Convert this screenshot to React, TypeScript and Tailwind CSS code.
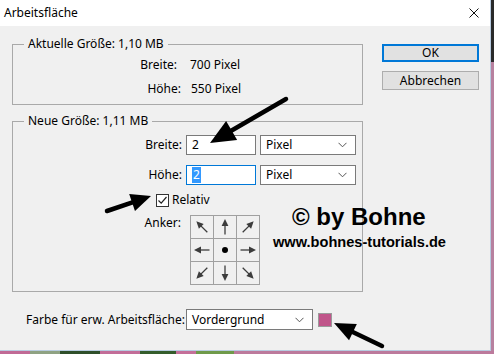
import React from "react";

type Pt = [number, number];

// thick black pointer arrow drawn on top of the dialog
function Pointer({ from, to, len = 21, half = 9 }: { from: Pt; to: Pt; len?: number; half?: number }) {
  const dx = to[0] - from[0];
  const dy = to[1] - from[1];
  const d = Math.hypot(dx, dy);
  const ux = dx / d;
  const uy = dy / d;
  const bx = to[0] - ux * len;
  const by = to[1] - uy * len;
  const nx = -uy * half;
  const ny = ux * half;
  return (
    <g>
      <line x1={from[0]} y1={from[1]} x2={bx + ux * 2} y2={by + uy * 2} stroke="#000" strokeWidth={4.5} strokeLinecap="round" />
      <polygon points={`${to[0]},${to[1]} ${bx + nx},${by + ny} ${bx - nx},${by - ny}`} fill="#000" />
    </g>
  );
}

function AnchorCell({ angle }: { angle: number | null }) {
  return (
    <div className="w-[23px] h-[23px] border-r border-b border-[#a0a0a0] flex items-center justify-center">
      <svg width="22" height="22" viewBox="0 0 22 22">
        {angle === null ? (
          <circle cx="11" cy="11" r="3" fill="#000" />
        ) : (
          <g transform={`rotate(${angle} 11 11)`}>
            <line x1="11" y1="18.5" x2="11" y2="8" stroke="#3c3c3c" strokeWidth="1.3" />
            <polygon points="11,3 7.6,10 14.4,10" fill="#3c3c3c" />
          </g>
        )}
      </svg>
    </div>
  );
}

function Chevron() {
  return (
    <svg width="9" height="6" viewBox="0 0 9 6" className="shrink-0">
      <polyline points="0.5,0.8 4.5,4.8 8.5,0.8" fill="none" stroke="#555" strokeWidth="1" />
    </svg>
  );
}

function Select({ label, w }: { label: string; w: string }) {
  return (
    <div className={`${w} h-full border border-[#7a7a7a] bg-white flex items-center justify-between pl-[5px] pr-[8px]`}>
      <span>{label}</span>
      <Chevron />
    </div>
  );
}

const anchors: (number | null)[] = [-45, 0, 45, -90, null, 90, -135, 180, 135];

export default function App() {
  return (
    <div className="relative w-[494px] h-[354px] overflow-hidden flex flex-col bg-[#bb7b9c] font-['Noto_Sans',sans-serif] text-[12px] text-black leading-[16px]">
      <div className="flex">
        {/* Dialog window */}
        <div className="w-[491px] h-[351px] flex flex-col border-r border-b border-[#b8cbe0]">
          {/* Title bar */}
          <div className="h-[26px] bg-white flex items-center justify-between pl-[4px] pr-[11px]">
            <span>Arbeitsfläche</span>
            <svg width="10" height="10" viewBox="0 0 10 10">
              <line x1="0.5" y1="0.5" x2="9.5" y2="9.5" stroke="#111" strokeWidth="1" />
              <line x1="9.5" y1="0.5" x2="0.5" y2="9.5" stroke="#111" strokeWidth="1" />
            </svg>
          </div>

          {/* Body */}
          <div className="flex-1 bg-[#f0f0f0] flex">
            <div className="w-[351px] ml-[12px] flex flex-col">
              {/* Aktuelle Größe */}
              <fieldset className="mt-[10px] h-[69px] border border-[#a9a9a9] pb-[1px]">
                <legend className="ml-[11px] px-[4px]">Aktuelle Größe: 1,10 MB</legend>
                <div className="pt-[1px] flex flex-col">
                  <div className="h-[24px] flex items-center">
                    <span className="w-[164px] text-right">Breite:</span>
                    <span className="ml-[13px]">700 Pixel</span>
                  </div>
                  <div className="h-[24px] flex items-center">
                    <span className="w-[168px] text-right">Höhe:</span>
                    <span className="ml-[10px]">550 Pixel</span>
                  </div>
                </div>
              </fieldset>

              {/* Neue Größe */}
              <fieldset className="mt-[8px] h-[179px] border border-[#a9a9a9]">
                <legend className="ml-[11px] px-[4px]">Neue Größe: 1,11 MB</legend>
                <div className="pt-[6px] flex flex-col">
                  <div className="h-[20px] flex items-center">
                    <span className="w-[169px] text-right">Breite:</span>
                    <div className="ml-[4px] w-[70px] h-full border border-[#7a7a7a] bg-white flex items-center pl-[5px]">2</div>
                    <div className="ml-[4px] h-full flex">
                      <Select label="Pixel" w="w-[96px]" />
                    </div>
                  </div>
                  <div className="mt-[10px] h-[20px] flex items-center">
                    <span className="w-[169px] text-right">Höhe:</span>
                    <div className="ml-[4px] w-[70px] h-full border border-[#0078d7] bg-white flex items-center pl-[5px]">
                      <span className="bg-[#3399ff] text-white h-[16px] px-[1px]">2</span>
                    </div>
                    <div className="ml-[4px] h-full flex">
                      <Select label="Pixel" w="w-[96px]" />
                    </div>
                  </div>
                  <div className="mt-[8px] h-[14px] flex items-center pl-[143px]">
                    <div className="w-[13px] h-[13px] border border-[#333] bg-white flex items-center justify-center">
                      <svg width="11" height="11" viewBox="0 0 11 11">
                        <polyline points="1.5,5.5 4.2,8.2 9.5,2" fill="none" stroke="#222" strokeWidth="1.2" />
                      </svg>
                    </div>
                    <span className="ml-[3px]">Relativ</span>
                  </div>
                  <div className="mt-[8px] flex items-start">
                    <span className="w-[168px] text-right">Anker:</span>
                    <div className="ml-[9px] grid grid-cols-3 border-l border-t border-[#a0a0a0]">
                      {anchors.map((a, i) => (
                        <AnchorCell key={i} angle={a} />
                      ))}
                    </div>
                  </div>
                </div>
              </fieldset>

              {/* Farbe */}
              <div className="mt-[17px] h-[21px] flex items-center pl-[14px]">
                <span className="w-[155px] whitespace-nowrap">Farbe für erw. Arbeitsfläche:</span>
                <div className="ml-[5px] h-full flex">
                  <Select label="Vordergrund" w="w-[127px]" />
                </div>
                <div className="ml-[5px] w-[14px] h-[14px] border border-[#9a9a9a] bg-[#c0558a]" />
              </div>
            </div>

            {/* Buttons */}
            <div className="ml-[19px] w-[97px] flex flex-col">
              <div className="mt-[18px] h-[18px] border-2 border-[#0078d7] bg-[#e1e1e1] flex items-center justify-center">OK</div>
              <div className="mt-[9px] h-[19px] border border-[#adadad] bg-[#e1e1e1] flex items-center justify-center">Abbrechen</div>
            </div>
          </div>
        </div>

        {/* desktop behind, right edge */}
        <div className="flex-1 flex flex-col">
          <div className="h-[62px] bg-[#2a2a2a]" />
          <div className="flex-1 bg-[#b7819f]" />
        </div>
      </div>

      {/* desktop behind, bottom edge */}
      <div className="flex-1 flex">
        <div className="w-[30px] bg-[#c06a95]" />
        <div className="w-[30px] bg-[#8fa283]" />
        <div className="w-[40px] bg-[#2f4f2a]" />
        <div className="w-[40px] bg-[#c26d98]" />
        <div className="w-[36px] bg-[#355d2c]" />
        <div className="w-[20px] bg-[#c46f99]" />
        <div className="w-[38px] bg-[#6f9a4a]" />
        <div className="flex-1 bg-[#bc7a9c]" />
      </div>

      {/* watermark */}
      <div className="absolute left-[292px] top-[203px] font-['Liberation_Sans',Arial,sans-serif] font-bold text-black text-[24px] leading-[28px]">
        © by Bohne
      </div>
      <div className="absolute left-[273px] top-[233px] font-['Liberation_Sans',Arial,sans-serif] font-bold text-black text-[14.6px] leading-[18px]">
        www.bohnes-tutorials.de
      </div>

      {/* pointer arrows */}
      <svg className="absolute inset-0 pointer-events-none" width="494" height="354">
        <Pointer from={[286, 99]} to={[210, 143]} len={25} half={11} />
        <Pointer from={[107, 211]} to={[151, 196]} len={20} half={9} />
        <Pointer from={[382, 346]} to={[334, 323]} len={21} half={9} />
      </svg>
    </div>
  );
}
